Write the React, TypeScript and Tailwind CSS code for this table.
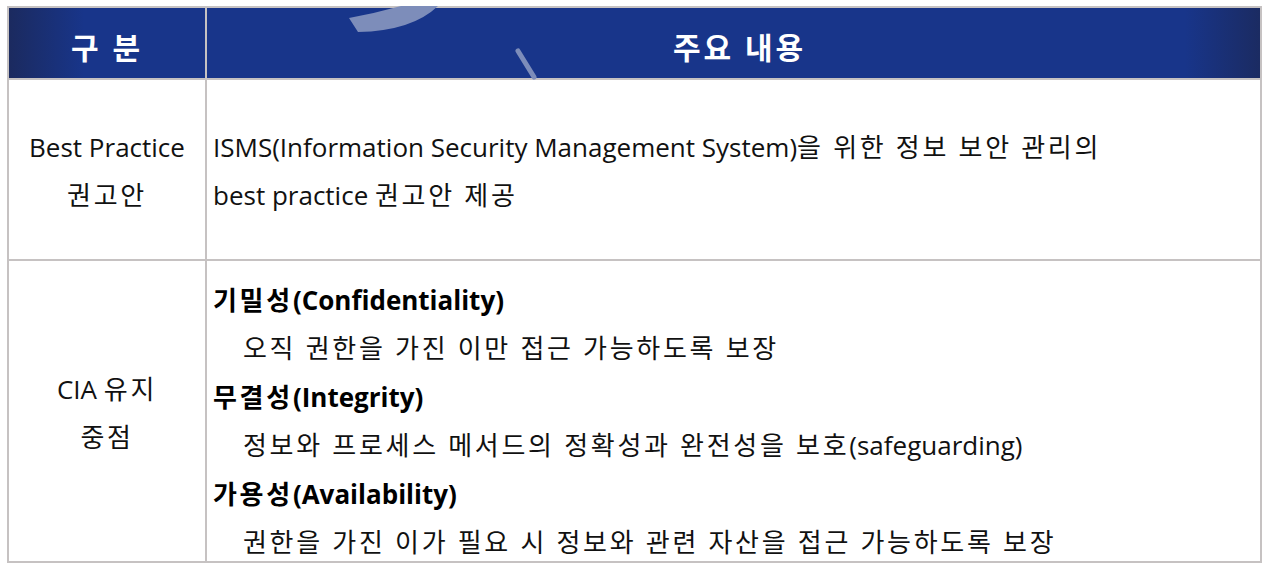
import React from 'react';

const font = { fontFamily: '"Open Sans", "Noto Sans CJK KR", sans-serif' };

type Item = { title: string; desc: string };

const cia: Item[] = [
  { title: '기밀성(Confidentiality)', desc: '오직 권한을 가진 이만 접근 가능하도록 보장' },
  { title: '무결성(Integrity)', desc: '정보와 프로세스 메서드의 정확성과 완전성을 보호(safeguarding)' },
  { title: '가용성(Availability)', desc: '권한을 가진 이가 필요 시 정보와 관련 자산을 접근 가능하도록 보장' },
];

// Hangul runs are set wider than the latin text in the source deck
function Ko({ text }: { text: string }) {
  const parts = text.split(/([\uAC00-\uD7A3](?:[\uAC00-\uD7A3 ]*[\uAC00-\uD7A3])?)/);
  return (
    <>
      {parts.map((p, i) =>
        i % 2 === 1 ? (
          <span key={i} className="tracking-[2.7px]">{p}</span>
        ) : (
          <React.Fragment key={i}>{p}</React.Fragment>
        )
      )}
    </>
  );
}

function HeaderDecor() {
  // light arc + stroke drawn over the header band
  return (
    <svg className="absolute left-0 top-0 pointer-events-none" width="1268" height="100" viewBox="0 0 1268 100">
      <path d="M349 18 Q376 13 401 6 L438 6 Q412 31 358 32 Z" fill="#7d8dba" />
      <line x1="518" y1="51" x2="534" y2="77" stroke="#7d8dba" strokeWidth="5" strokeLinecap="round" />
    </svg>
  );
}

export default function App() {
  return (
    <div className="relative w-[1268px] h-[564px] bg-white overflow-hidden" style={font}>
      <div className="absolute left-[7px] top-[6px] w-[1255px] h-[557px] border-2 border-[#c6c2c2] overflow-hidden">
        <div className="grid grid-cols-[198px_1fr] h-[72px] bg-[linear-gradient(to_right,#1b2a5f,#18358a_6%,#18358a_94%,#1b2b62)] border-b-2 border-[#c6c2c2]">
          <div className="flex items-center justify-center pt-[8px] border-r-2 border-[#c6c2c2] text-white font-bold text-[30px] tracking-[3px]">
            구 분
          </div>
          <div className="flex items-center justify-center pt-[8px] pl-[12px] text-white font-bold text-[30px] tracking-[3px]">
            주요 내용
          </div>
        </div>

        <div className="grid grid-cols-[198px_1fr] h-[181px] border-b-2 border-[#c6c2c2] text-[#111] text-[26px] leading-[48px]">
          <div className="flex flex-col items-center justify-center pt-[2px] border-r-2 border-[#c6c2c2] text-center">
            <span>Best Practice</span>
            <span><Ko text="권고안" /></span>
          </div>
          <div className="flex flex-col justify-center pt-[2px] pl-[6px]">
            <span><Ko text="ISMS(Information Security Management System)을 위한 정보 보안 관리의" /></span>
            <span><Ko text="best practice 권고안 제공" /></span>
          </div>
        </div>

        <div className="grid grid-cols-[198px_1fr] h-[310px] text-[#111] text-[26px] leading-[48.4px]">
          <div className="flex flex-col items-center justify-start pt-[104px] border-r-2 border-[#c6c2c2] text-center">
            <span><Ko text="CIA 유지" /></span>
            <span><Ko text="중점" /></span>
          </div>
          <div className="flex flex-col pt-[15px] pl-[6px]">
            {cia.map((c) => (
              <React.Fragment key={c.title}>
                <span className="font-bold text-black"><Ko text={c.title} /></span>
                <span className="pl-[30px]"><Ko text={c.desc} /></span>
              </React.Fragment>
            ))}
          </div>
        </div>
      </div>
      <HeaderDecor />
    </div>
  );
}
